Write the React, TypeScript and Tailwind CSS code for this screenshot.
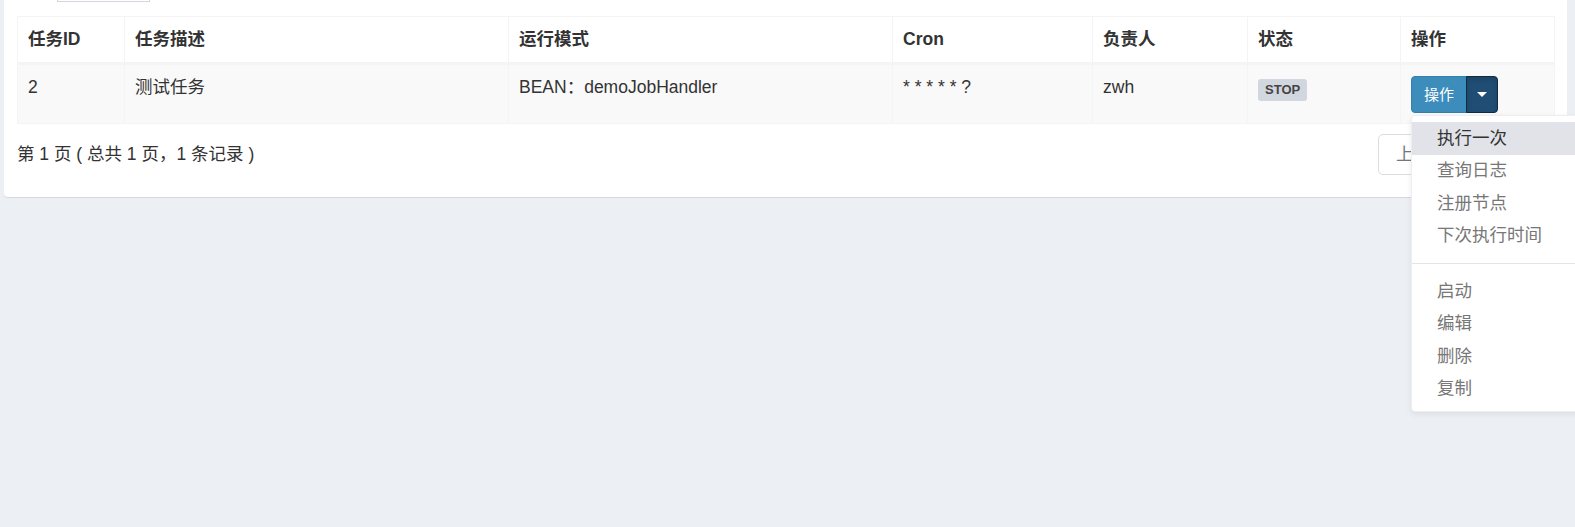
import React from "react";

const columns = [
  { title: "任务ID", width: "w-[107px]" },
  { title: "任务描述", width: "w-[384px]" },
  { title: "运行模式", width: "w-[384px]" },
  { title: "Cron", width: "w-[200px]" },
  { title: "负责人", width: "w-[155px]" },
  { title: "状态", width: "w-[153px]" },
  { title: "操作", width: "w-[154px]" },
];

const menuTop = ["执行一次", "查询日志", "注册节点", "下次执行时间"];
const menuBottom = ["启动", "编辑", "删除", "复制"];

function ActionDropdown() {
  return (
    <div className="relative mt-[1px] inline-flex">
      <button className="h-[37px] rounded-l-[4px] border border-[#367fa9] bg-[#3c8dbc] px-[12px] text-[15px] leading-[22px] text-white">
        操作
      </button>
      <button className="-ml-px flex h-[37px] w-[32px] items-center justify-center rounded-r-[4px] border border-[#122b40] bg-[#204d74] shadow-[inset_0_3px_5px_rgba(0,0,0,0.125)]">
        <span className="block h-0 w-0 border-x-[5px] border-t-[5px] border-x-transparent border-t-white" />
      </button>

      {/* open menu, spills past the viewport on the right */}
      <div className="absolute left-0 top-[39px] z-10 w-[200px] rounded-[4px] border border-[#eee] bg-white py-[6px] font-normal shadow-[0_2px_6px_rgba(0,0,0,0.08)]">
        {menuTop.map((item, i) => (
          <div
            key={item}
            className={
              i === 0
                ? "whitespace-nowrap bg-[#e1e3e9] px-[25px] py-[3.75px] text-[#333]"
                : "whitespace-nowrap px-[25px] py-[3.75px] text-[#777]"
            }
          >
            {item}
          </div>
        ))}
        <div className="my-[11px] h-px bg-[#e5e5e5]" />
        {menuBottom.map((item) => (
          <div key={item} className="whitespace-nowrap px-[25px] py-[3.75px] text-[#777]">
            {item}
          </div>
        ))}
      </div>
    </div>
  );
}

export default function App() {
  return (
    <div className="relative h-[527px] w-full overflow-hidden bg-[#ecf0f5] pl-[4px] pr-[8px] font-['Liberation_Sans','Noto_Sans_CJK_SC',sans-serif] text-[17.5px] leading-[25px] text-[#333]">
      <div className="rounded-b-[4px] bg-white px-[13px] pb-[22px] shadow-[0_1px_1px_rgba(0,0,0,0.1)]">
        {/* bottom edge of the search input, scrolled out of view */}
        <div className="ml-[40px] h-[2px] w-[93px] border-x border-b border-[#d2d6de]" />

        <table className="mt-[14px] w-full table-fixed border-collapse">
          <thead>
            <tr className="bg-white">
              {columns.map((c) => (
                <th
                  key={c.title}
                  className={`${c.width} border border-b-[3px] border-[#f4f4f4] p-[10px] text-left font-bold`}
                >
                  {c.title}
                </th>
              ))}
            </tr>
          </thead>
          <tbody>
            <tr className="bg-[#f9f9f9]">
              <td className="border border-[#f4f4f4] p-[10px] align-top">2</td>
              <td className="border border-[#f4f4f4] p-[10px] align-top">测试任务</td>
              <td className="border border-[#f4f4f4] p-[10px] align-top">BEAN：demoJobHandler</td>
              <td className="border border-[#f4f4f4] p-[10px] align-top">* * * * * ?</td>
              <td className="border border-[#f4f4f4] p-[10px] align-top">zwh</td>
              <td className="border border-[#f4f4f4] p-[10px] align-top">
                <span className="mt-[4px] block w-fit rounded-[3px] bg-[#d2d6de] px-[7px] pb-[4px] pt-[3px] text-[13px] font-bold leading-[15px] text-[#444]">
                  STOP
                </span>
              </td>
              <td className="border border-[#f4f4f4] p-[10px] align-top">
                <ActionDropdown />
              </td>
            </tr>
          </tbody>
        </table>

        <div className="mt-[10px] flex items-center justify-between">
          <span>第 1 页 ( 总共 1 页，1 条记录 )</span>
          <div className="flex">
            <span className="rounded-l-[5px] border border-[#ddd] px-[17px] leading-[39px] text-[#777]">上一页</span>
            <span className="-ml-px rounded-r-[5px] border border-[#ddd] px-[17px] leading-[39px] text-[#777]">下一页</span>
          </div>
        </div>
      </div>
    </div>
  );
}
